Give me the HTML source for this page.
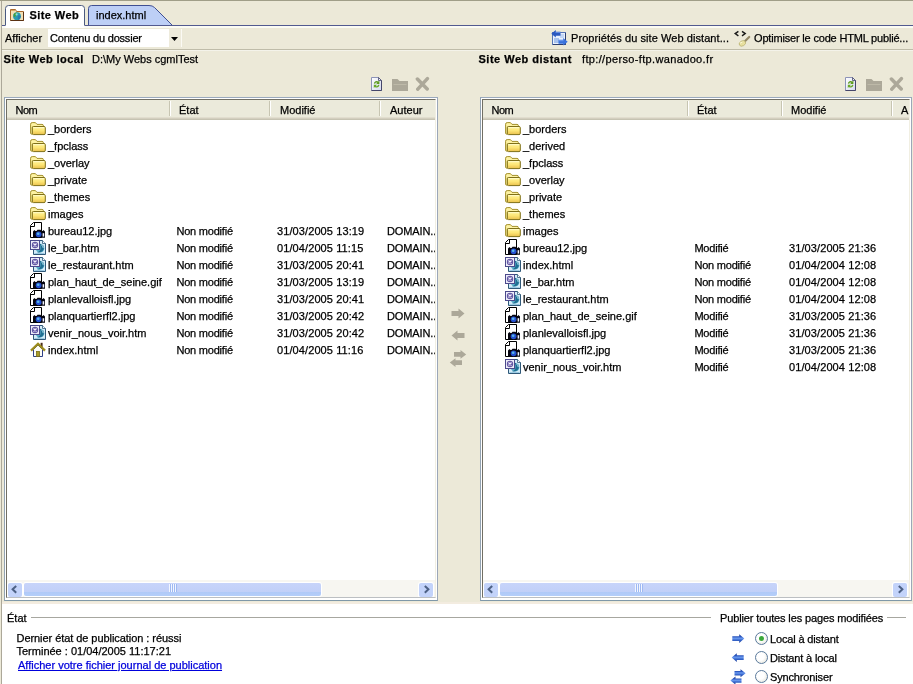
<!DOCTYPE html>
<html lang="fr"><head><meta charset="utf-8"><title>Site Web</title>
<style>
html,body{margin:0;padding:0}
body{will-change:transform;width:913px;height:684px;overflow:hidden;background:#ece9d8;position:relative;font-family:"Liberation Sans",sans-serif;font-size:11px;color:#000;line-height:13px;-webkit-text-stroke-width:.25px}
.a{position:absolute;white-space:pre}
b{letter-spacing:.42px}
.panel{position:absolute;top:97px;height:502px;border:1px solid #93a0b2;border-color:#9aa9bd #9ba7b8 #7f98a8 #93a3b2;background:#fff}
.pin{position:absolute;left:0;top:0;right:0;bottom:0;border:1px solid #fff}
.pin2{position:absolute;left:0;top:0;height:497px;border-top:1px solid #716f64;border-left:1px solid #716f64;border-right:1px solid #f1efe2;border-bottom:1px solid #bcbfc2;background:#fff;overflow:hidden}
.hdr{position:absolute;left:0;top:0;right:0;height:17px;background:#ebeadb;border-bottom:3px solid #d3cfbf}
.hdr:after{content:"";position:absolute;left:0;right:0;bottom:-3px;height:1px;background:#c6c3b2}
.hdr:before{content:"";position:absolute;left:0;right:0;bottom:-1px;height:1px;background:#e1ddce}
.ht{position:absolute;top:4px;line-height:13px;white-space:pre}
.sep{position:absolute;top:1px;width:1px;height:15px;background:#c7c5b2;border-right:1px solid #fff}
.row{position:absolute;left:0;right:0;height:17px}
.c{position:absolute;top:1px;line-height:17px;white-space:pre}
.ic{position:absolute}
.sb{position:absolute;left:0;right:0;bottom:0;height:17px;background:#f7f6f1}
.sbtn{position:absolute;top:3px;width:14px;height:14px;background:#c3d3fa;border-radius:2px;box-shadow:0 0 0 1px #fff}
.thumb{position:absolute;top:3px;height:13px;border-radius:2px;box-shadow:0 0 0 1px #fff;background:linear-gradient(#c7d4fa 0%,#c2d0f8 66%,#b0caf8 72%,#b5cef9 100%)}
.grip{position:absolute;left:50%;top:1px;width:8px;height:8px;margin-left:-4px;background:repeating-linear-gradient(90deg,#f2f6ff 0 1px,#9fb9f2 1px 2px)}
.ln{position:absolute;height:1px}
.radio{position:absolute;width:11px;height:11px;border:1px solid #5b7a9c;border-radius:50%;background:radial-gradient(circle at 40% 40%,#fff 40%,#dcdcd0)}
</style></head>
<body>
<svg width="0" height="0" style="position:absolute"><defs><linearGradient id="gf" x1="0" y1="0" x2="0" y2="1"><stop offset="0" stop-color="#fff59a"/><stop offset=".5" stop-color="#fde676"/><stop offset="1" stop-color="#eac04c"/></linearGradient><linearGradient id="gp" x1="0" y1="0" x2="1" y2="1"><stop offset="0" stop-color="#ffffff"/><stop offset="1" stop-color="#d4d9ee"/></linearGradient><linearGradient id="gb" x1="0" y1="0" x2="0" y2="1"><stop offset="0" stop-color="#16368c"/><stop offset=".28" stop-color="#2a56c0"/><stop offset=".46" stop-color="#6c9cf0"/><stop offset=".68" stop-color="#3565cc"/><stop offset="1" stop-color="#1c3c94"/></linearGradient></defs></svg><div class="ln" style="left:0;top:0;width:913px;background:#a09e88"></div><div class="a" style="left:1px;top:1px;width:1px;height:683px;background:#aca899"></div><div class="a" style="left:2px;top:26px;width:911px;height:2px;background:#fbfbf3"></div><svg class="a" style="left:0;top:0" width="913" height="28" viewBox="0 0 913 28">
<path d="M88.5 25.5V8.5Q88.5 5.5 91.5 5.5H149Q152.5 5.5 154.5 7.5L172.5 25.5Z" fill="#bdcff6" stroke="#3f4f92"/>
<path d="M2 25.5H5.5M84.5 25.5H913" stroke="#525a90" fill="none"/>
<path d="M5.5 28V8.5Q5.5 5.5 8.5 5.5H81.5Q84.5 5.5 84.5 8.5V28Z" fill="#fff" stroke="none"/>
<path d="M5.5 25.5V8.5Q5.5 5.5 8.5 5.5H81.5Q84.5 5.5 84.5 8.5V25.5" fill="none" stroke="#4a5a80"/>
</svg><svg class="a" style="left:9px;top:8px" width="16" height="14" viewBox="0 0 16 14"><path d="M1.5 12.5V1.5H6.5L7.5 3.5H14.5V12.5Z" fill="#f2dfb4" stroke="#a8682c"/><path d="M2 2.5H6" stroke="#d8a868" stroke-width="1"/><path d="M14.5 4V12.5H1.5" fill="none" stroke="#5a3214" stroke-width="1"/><circle cx="8" cy="8.2" r="3.9" fill="#2a9cae"/><path d="M4.6 6.6Q6 4.4 8.2 4.6Q8 7 5.4 9.2Q4.4 8 4.6 6.6Z" fill="#4a9c34"/><path d="M9 7.5Q11 6.5 11.8 8.5Q11 11.5 9 11.8Q8.5 9.5 9 7.5Z" fill="#2a78b0"/><circle cx="7.6" cy="6.4" r="1.1" fill="#8fe0e0"/></svg><b class="a" style="left:29.5px;top:9px">Site Web</b><span class="a" style="left:96px;top:9px">index.html</span><span class="a" style="left:5px;top:32px">Afficher</span><div class="a" style="left:48px;top:29px;width:121px;height:18px;background:#fff"></div><span class="a" style="left:50px;top:32px;letter-spacing:-.2px">Contenu du dossier</span><div class="a" style="left:169px;top:29px;width:12px;height:18px;background:#eeebdc;border-right:1px solid #fbfaf4"></div><svg class="a" style="left:171px;top:37px" width="7" height="4" viewBox="0 0 7 4"><path d="M0 0H7L3.5 4Z" fill="#000"/></svg><svg class="a" style="left:551px;top:30px" width="17" height="16" viewBox="0 0 17 16"><rect x="1.5" y="2.5" width="13" height="12" fill="#e9f1fd" stroke="#5575b5"/><path d="M14.5 3V14.5H2" fill="none" stroke="#2c3e70"/><rect x="3" y="8" width="5" height="5" fill="#a9c3ee"/><rect x="9" y="4" width="4" height="4" fill="#c3d6f5"/><path d="M9.5 1.8H4.8V0L0.3 3.8L4.8 7.6V5.8H9.5Z" fill="#2b59c0"/><path d="M7.5 9.8H12.2V8L16.7 11.8L12.2 15.6V13.8H7.5Z" fill="#3a72dc"/><path d="M7.5 10.7H12.5" stroke="#7fa8f0" stroke-width=".8"/><path d="M4.5 2.5H9.5" stroke="#6f97e8" stroke-width=".8"/></svg><span class="a" style="left:571px;top:32px;letter-spacing:.07px">Propriétés du site Web distant...</span><svg class="a" style="left:733px;top:29px" width="18" height="18" viewBox="0 0 18 18"><path d="M5.4 2.4L2.2 4.6L5.4 6.8M9 2.4L12.2 4.6L9 6.8" fill="none" stroke="#1a1a1a" stroke-width="1.4"/><path d="M16.2 8L11.4 12.8" stroke="#948868" stroke-width="2.2" stroke-linecap="round"/><ellipse cx="9.4" cy="14.4" rx="3.4" ry="2.5" fill="#e8e0a0" stroke="#b8b070" stroke-width=".7" transform="rotate(-30 9.4 14.4)"/><path d="M7 14.2L9.4 13" stroke="#fffde0" stroke-width=".9"/></svg><span class="a" style="left:754px;top:32px;letter-spacing:-.18px">Optimiser le code HTML publié...</span><div class="ln" style="left:2px;top:49px;width:911px;background:#bfbca9"></div><div class="ln" style="left:2px;top:50px;width:911px;background:#f4f3ea"></div><b class="a" style="left:3.5px;top:53px">Site Web local</b><span class="a" style="left:92px;top:53px">D:\My Webs cgmlTest</span><b class="a" style="left:478.5px;top:53px;letter-spacing:.5px">Site Web distant</b><span class="a" style="left:582px;top:53px;letter-spacing:.35px">ftp://perso-ftp.wanadoo.fr</span><svg class="a" style="left:371px;top:77px" width="12" height="14" viewBox="0 0 12 14"><path d="M0.5 0.5H7.5L10.5 3.5V13.5H0.5Z" fill="url(#gp)" stroke="#8d93b8"/><path d="M10.5 3.5V13.5H0.5" fill="none" stroke="#45466a"/><path d="M7.5 0.5V3.5H10.5Z" fill="#e8ecf8" stroke="#45466a" stroke-width=".8"/><path d="M2.8 6.6A2.9 2.9 0 0 1 7.4 4.6L8.4 3.6V6.9H5.2L6.3 5.7A1.5 1.5 0 0 0 4.2 6.8Z" fill="#5e9c1e"/><path d="M8.4 8A2.9 2.9 0 0 1 3.8 10L2.8 11V7.7H6L4.9 8.9A1.5 1.5 0 0 0 7 7.8Z" fill="#6aa828"/></svg><svg class="a" style="left:392px;top:78px" width="16" height="13" viewBox="0 0 16 13"><path d="M0 13V1H5.5L7.5 3H16V13Z" fill="#aca899"/><path d="M1.5 6.5H14.5" stroke="#bdb9a8" stroke-width="1"/></svg><svg class="a" style="left:415px;top:76px" width="15" height="15" viewBox="0 0 15 15"><path d="M2.4 3L12.2 13M12.4 2.6L2.8 13.2" stroke="#aca899" stroke-width="3.5" stroke-linecap="round"/></svg><svg class="a" style="left:845px;top:77px" width="12" height="14" viewBox="0 0 12 14"><path d="M0.5 0.5H7.5L10.5 3.5V13.5H0.5Z" fill="url(#gp)" stroke="#8d93b8"/><path d="M10.5 3.5V13.5H0.5" fill="none" stroke="#45466a"/><path d="M7.5 0.5V3.5H10.5Z" fill="#e8ecf8" stroke="#45466a" stroke-width=".8"/><path d="M2.8 6.6A2.9 2.9 0 0 1 7.4 4.6L8.4 3.6V6.9H5.2L6.3 5.7A1.5 1.5 0 0 0 4.2 6.8Z" fill="#5e9c1e"/><path d="M8.4 8A2.9 2.9 0 0 1 3.8 10L2.8 11V7.7H6L4.9 8.9A1.5 1.5 0 0 0 7 7.8Z" fill="#6aa828"/></svg><svg class="a" style="left:866px;top:78px" width="16" height="13" viewBox="0 0 16 13"><path d="M0 13V1H5.5L7.5 3H16V13Z" fill="#aca899"/><path d="M1.5 6.5H14.5" stroke="#bdb9a8" stroke-width="1"/></svg><svg class="a" style="left:889px;top:76px" width="15" height="15" viewBox="0 0 15 15"><path d="M2.4 3L12.2 13M12.4 2.6L2.8 13.2" stroke="#aca899" stroke-width="3.5" stroke-linecap="round"/></svg><div class="panel" style="left:4px;width:432px"><div class="pin"><div class="pin2" style="width:428px"><div class="hdr"><span class="ht" style="left:8.5px;letter-spacing:-.5px">Nom</span><span class="ht" style="left:172.0px">État</span><i class="sep" style="left:162px"></i><span class="ht" style="left:273.0px">Modifié</span><i class="sep" style="left:262px"></i><span class="ht" style="left:383.0px">Auteur</span><i class="sep" style="left:372px"></i></div><div class="row" style="top:20px"><svg class="ic"  width="16" height="14" viewBox="0 0 16 14" style="left:23px;top:2px"><path d="M0.6 11V2.2Q0.6 0.6 2.2 0.6H5.4L7 2.4H12Q13.4 2.4 13.4 3.7V5H2.4V12.2H1.8Q0.6 12.2 0.6 11Z" fill="#fdf2a2" stroke="#a4902c"/><path d="M2.3 5.7Q2.3 4.5 3.5 4.5H14Q15.3 4.5 15.3 5.7V11.3Q15.3 12.6 14 12.6H3.5Q2.3 12.6 2.3 11.3Z" fill="url(#gf)" stroke="#7f7018"/><path d="M3.4 5.7H14.2" stroke="#fffacc" stroke-width="1"/></svg><span class="c" style="left:41px">_borders</span></div><div class="row" style="top:37px"><svg class="ic"  width="16" height="14" viewBox="0 0 16 14" style="left:23px;top:2px"><path d="M0.6 11V2.2Q0.6 0.6 2.2 0.6H5.4L7 2.4H12Q13.4 2.4 13.4 3.7V5H2.4V12.2H1.8Q0.6 12.2 0.6 11Z" fill="#fdf2a2" stroke="#a4902c"/><path d="M2.3 5.7Q2.3 4.5 3.5 4.5H14Q15.3 4.5 15.3 5.7V11.3Q15.3 12.6 14 12.6H3.5Q2.3 12.6 2.3 11.3Z" fill="url(#gf)" stroke="#7f7018"/><path d="M3.4 5.7H14.2" stroke="#fffacc" stroke-width="1"/></svg><span class="c" style="left:41px">_fpclass</span></div><div class="row" style="top:54px"><svg class="ic"  width="16" height="14" viewBox="0 0 16 14" style="left:23px;top:2px"><path d="M0.6 11V2.2Q0.6 0.6 2.2 0.6H5.4L7 2.4H12Q13.4 2.4 13.4 3.7V5H2.4V12.2H1.8Q0.6 12.2 0.6 11Z" fill="#fdf2a2" stroke="#a4902c"/><path d="M2.3 5.7Q2.3 4.5 3.5 4.5H14Q15.3 4.5 15.3 5.7V11.3Q15.3 12.6 14 12.6H3.5Q2.3 12.6 2.3 11.3Z" fill="url(#gf)" stroke="#7f7018"/><path d="M3.4 5.7H14.2" stroke="#fffacc" stroke-width="1"/></svg><span class="c" style="left:41px">_overlay</span></div><div class="row" style="top:71px"><svg class="ic"  width="16" height="14" viewBox="0 0 16 14" style="left:23px;top:2px"><path d="M0.6 11V2.2Q0.6 0.6 2.2 0.6H5.4L7 2.4H12Q13.4 2.4 13.4 3.7V5H2.4V12.2H1.8Q0.6 12.2 0.6 11Z" fill="#fdf2a2" stroke="#a4902c"/><path d="M2.3 5.7Q2.3 4.5 3.5 4.5H14Q15.3 4.5 15.3 5.7V11.3Q15.3 12.6 14 12.6H3.5Q2.3 12.6 2.3 11.3Z" fill="url(#gf)" stroke="#7f7018"/><path d="M3.4 5.7H14.2" stroke="#fffacc" stroke-width="1"/></svg><span class="c" style="left:41px">_private</span></div><div class="row" style="top:88px"><svg class="ic"  width="16" height="14" viewBox="0 0 16 14" style="left:23px;top:2px"><path d="M0.6 11V2.2Q0.6 0.6 2.2 0.6H5.4L7 2.4H12Q13.4 2.4 13.4 3.7V5H2.4V12.2H1.8Q0.6 12.2 0.6 11Z" fill="#fdf2a2" stroke="#a4902c"/><path d="M2.3 5.7Q2.3 4.5 3.5 4.5H14Q15.3 4.5 15.3 5.7V11.3Q15.3 12.6 14 12.6H3.5Q2.3 12.6 2.3 11.3Z" fill="url(#gf)" stroke="#7f7018"/><path d="M3.4 5.7H14.2" stroke="#fffacc" stroke-width="1"/></svg><span class="c" style="left:41px">_themes</span></div><div class="row" style="top:105px"><svg class="ic"  width="16" height="14" viewBox="0 0 16 14" style="left:23px;top:2px"><path d="M0.6 11V2.2Q0.6 0.6 2.2 0.6H5.4L7 2.4H12Q13.4 2.4 13.4 3.7V5H2.4V12.2H1.8Q0.6 12.2 0.6 11Z" fill="#fdf2a2" stroke="#a4902c"/><path d="M2.3 5.7Q2.3 4.5 3.5 4.5H14Q15.3 4.5 15.3 5.7V11.3Q15.3 12.6 14 12.6H3.5Q2.3 12.6 2.3 11.3Z" fill="url(#gf)" stroke="#7f7018"/><path d="M3.4 5.7H14.2" stroke="#fffacc" stroke-width="1"/></svg><span class="c" style="left:41px">images</span></div><div class="row" style="top:122px"><svg class="ic"  width="16" height="16" viewBox="0 0 16 16" style="left:23px;top:0px"><path d="M3.5 0.5H11.5V15.5H0.5V3.5Z" fill="#fff" stroke="#000"/><path d="M0.5 4.5H4.5V0.5" fill="none" stroke="#000"/><path d="M3 9.5L4.5 8L5.5 9H6.5L7.5 7.8H10.5L11.5 9H12.5L13.5 8L15 9.5V15.8H3Z" fill="#05050f"/><circle cx="8.6" cy="12.3" r="2.9" fill="#2450d0"/><circle cx="8.2" cy="11.8" r="1.3" fill="#58b8e8"/><rect x="12.6" y="11.2" width="1.6" height="3.4" fill="#eef2ff"/></svg><span class="c" style="left:41px">bureau12.jpg</span><span class="c" style="left:169.4px;letter-spacing:-.2px">Non modifié</span><span class="c" style="left:270px;letter-spacing:.1px">31/03/2005 13:19</span><span class="c" style="left:380px;letter-spacing:-.12px">DOMAIN..</span></div><div class="row" style="top:139px"><svg class="ic"  width="16" height="16" viewBox="0 0 16 16" style="left:23px;top:1px"><path d="M3.5 0.5H12.5L15.5 3.5V14.5H3.5Z" fill="#d4ecf8" stroke="#2f5878"/><path d="M12.5 0.5V3.5H15.5" fill="#f4fbff" stroke="#2f5878" stroke-width=".8"/><circle cx="10" cy="8.2" r="4.3" fill="#58acc8"/><path d="M9.6 3.6Q14.8 5 13.6 9.6Q12 13 7 12.4Q10.6 11.2 10.6 8Q10.6 5.4 9.6 3.6Z" fill="#1f6f92"/><path d="M11 4.6Q13.4 5.6 13.2 8" stroke="#b8e4f0" stroke-width=".9" fill="none"/><path d="M4.5 13.5H14.5" stroke="#9ccbe4" stroke-width="1"/><rect x="0.5" y="0.5" width="9" height="9" fill="#eeeefa" stroke="#4c4a8c"/><circle cx="5" cy="5" r="3.2" fill="#6458a4"/><path d="M3.5 3.5L6.5 6.5M6.5 3.5L3.5 6.5" stroke="#f4f0ff" stroke-width="1.2"/></svg><span class="c" style="left:41px">le_bar.htm</span><span class="c" style="left:169.4px;letter-spacing:-.2px">Non modifié</span><span class="c" style="left:270px;letter-spacing:.1px">01/04/2005 11:15</span><span class="c" style="left:380px;letter-spacing:-.12px">DOMAIN..</span></div><div class="row" style="top:156px"><svg class="ic"  width="16" height="16" viewBox="0 0 16 16" style="left:23px;top:1px"><path d="M3.5 0.5H12.5L15.5 3.5V14.5H3.5Z" fill="#d4ecf8" stroke="#2f5878"/><path d="M12.5 0.5V3.5H15.5" fill="#f4fbff" stroke="#2f5878" stroke-width=".8"/><circle cx="10" cy="8.2" r="4.3" fill="#58acc8"/><path d="M9.6 3.6Q14.8 5 13.6 9.6Q12 13 7 12.4Q10.6 11.2 10.6 8Q10.6 5.4 9.6 3.6Z" fill="#1f6f92"/><path d="M11 4.6Q13.4 5.6 13.2 8" stroke="#b8e4f0" stroke-width=".9" fill="none"/><path d="M4.5 13.5H14.5" stroke="#9ccbe4" stroke-width="1"/><rect x="0.5" y="0.5" width="9" height="9" fill="#eeeefa" stroke="#4c4a8c"/><circle cx="5" cy="5" r="3.2" fill="#6458a4"/><path d="M3.5 3.5L6.5 6.5M6.5 3.5L3.5 6.5" stroke="#f4f0ff" stroke-width="1.2"/></svg><span class="c" style="left:41px">le_restaurant.htm</span><span class="c" style="left:169.4px;letter-spacing:-.2px">Non modifié</span><span class="c" style="left:270px;letter-spacing:.1px">31/03/2005 20:41</span><span class="c" style="left:380px;letter-spacing:-.12px">DOMAIN..</span></div><div class="row" style="top:173px"><svg class="ic"  width="16" height="16" viewBox="0 0 16 16" style="left:23px;top:0px"><path d="M3.5 0.5H11.5V15.5H0.5V3.5Z" fill="#fff" stroke="#000"/><path d="M0.5 4.5H4.5V0.5" fill="none" stroke="#000"/><path d="M3 9.5L4.5 8L5.5 9H6.5L7.5 7.8H10.5L11.5 9H12.5L13.5 8L15 9.5V15.8H3Z" fill="#05050f"/><circle cx="8.6" cy="12.3" r="2.9" fill="#2450d0"/><circle cx="8.2" cy="11.8" r="1.3" fill="#58b8e8"/><rect x="12.6" y="11.2" width="1.6" height="3.4" fill="#eef2ff"/></svg><span class="c" style="left:41px">plan_haut_de_seine.gif</span><span class="c" style="left:169.4px;letter-spacing:-.2px">Non modifié</span><span class="c" style="left:270px;letter-spacing:.1px">31/03/2005 13:19</span><span class="c" style="left:380px;letter-spacing:-.12px">DOMAIN..</span></div><div class="row" style="top:190px"><svg class="ic"  width="16" height="16" viewBox="0 0 16 16" style="left:23px;top:0px"><path d="M3.5 0.5H11.5V15.5H0.5V3.5Z" fill="#fff" stroke="#000"/><path d="M0.5 4.5H4.5V0.5" fill="none" stroke="#000"/><path d="M3 9.5L4.5 8L5.5 9H6.5L7.5 7.8H10.5L11.5 9H12.5L13.5 8L15 9.5V15.8H3Z" fill="#05050f"/><circle cx="8.6" cy="12.3" r="2.9" fill="#2450d0"/><circle cx="8.2" cy="11.8" r="1.3" fill="#58b8e8"/><rect x="12.6" y="11.2" width="1.6" height="3.4" fill="#eef2ff"/></svg><span class="c" style="left:41px">planlevalloisfl.jpg</span><span class="c" style="left:169.4px;letter-spacing:-.2px">Non modifié</span><span class="c" style="left:270px;letter-spacing:.1px">31/03/2005 20:41</span><span class="c" style="left:380px;letter-spacing:-.12px">DOMAIN..</span></div><div class="row" style="top:207px"><svg class="ic"  width="16" height="16" viewBox="0 0 16 16" style="left:23px;top:0px"><path d="M3.5 0.5H11.5V15.5H0.5V3.5Z" fill="#fff" stroke="#000"/><path d="M0.5 4.5H4.5V0.5" fill="none" stroke="#000"/><path d="M3 9.5L4.5 8L5.5 9H6.5L7.5 7.8H10.5L11.5 9H12.5L13.5 8L15 9.5V15.8H3Z" fill="#05050f"/><circle cx="8.6" cy="12.3" r="2.9" fill="#2450d0"/><circle cx="8.2" cy="11.8" r="1.3" fill="#58b8e8"/><rect x="12.6" y="11.2" width="1.6" height="3.4" fill="#eef2ff"/></svg><span class="c" style="left:41px">planquartierfl2.jpg</span><span class="c" style="left:169.4px;letter-spacing:-.2px">Non modifié</span><span class="c" style="left:270px;letter-spacing:.1px">31/03/2005 20:42</span><span class="c" style="left:380px;letter-spacing:-.12px">DOMAIN..</span></div><div class="row" style="top:224px"><svg class="ic"  width="16" height="16" viewBox="0 0 16 16" style="left:23px;top:1px"><path d="M3.5 0.5H12.5L15.5 3.5V14.5H3.5Z" fill="#d4ecf8" stroke="#2f5878"/><path d="M12.5 0.5V3.5H15.5" fill="#f4fbff" stroke="#2f5878" stroke-width=".8"/><circle cx="10" cy="8.2" r="4.3" fill="#58acc8"/><path d="M9.6 3.6Q14.8 5 13.6 9.6Q12 13 7 12.4Q10.6 11.2 10.6 8Q10.6 5.4 9.6 3.6Z" fill="#1f6f92"/><path d="M11 4.6Q13.4 5.6 13.2 8" stroke="#b8e4f0" stroke-width=".9" fill="none"/><path d="M4.5 13.5H14.5" stroke="#9ccbe4" stroke-width="1"/><rect x="0.5" y="0.5" width="9" height="9" fill="#eeeefa" stroke="#4c4a8c"/><circle cx="5" cy="5" r="3.2" fill="#6458a4"/><path d="M3.5 3.5L6.5 6.5M6.5 3.5L3.5 6.5" stroke="#f4f0ff" stroke-width="1.2"/></svg><span class="c" style="left:41px">venir_nous_voir.htm</span><span class="c" style="left:169.4px;letter-spacing:-.2px">Non modifié</span><span class="c" style="left:270px;letter-spacing:.1px">31/03/2005 20:42</span><span class="c" style="left:380px;letter-spacing:-.12px">DOMAIN..</span></div><div class="row" style="top:241px"><svg class="ic"  width="16" height="16" viewBox="0 0 16 16" style="left:23px;top:1px"><path d="M3.5 7.5V14.5H12.5V7.5L8 3Z" fill="#fcfcf6" stroke="#2f3f86"/><rect x="6.5" y="9.5" width="3" height="5" fill="#a89c28" stroke="#7a6e14" stroke-width=".8"/><rect x="10.6" y="0.8" width="2" height="5" fill="#4a2c18"/><path d="M1 8.6L8 1.8L15 8.6" fill="none" stroke="#9c8c1c" stroke-width="2.3"/></svg><span class="c" style="left:41px">index.html</span><span class="c" style="left:169.4px;letter-spacing:-.2px">Non modifié</span><span class="c" style="left:270px;letter-spacing:.1px">01/04/2005 11:16</span><span class="c" style="left:380px;letter-spacing:-.12px">DOMAIN..</span></div><div class="sb"><div class="sbtn" style="left:1px"><svg width="14" height="14" viewBox="0 0 14 14"><path d="M8.2 2.9L4.6 6.3L8.2 9.7" fill="none" stroke="#4d6185" stroke-width="2"/></svg></div><div class="thumb" style="left:17px;width:297px"><i class="grip"></i></div><div class="sbtn" style="right:2px"><svg width="14" height="14" viewBox="0 0 14 14"><path d="M5.8 2.9L9.4 6.3L5.8 9.7" fill="none" stroke="#4d6185" stroke-width="2"/></svg></div></div></div></div></div><div class="panel" style="left:480px;width:430px"><div class="pin"><div class="pin2" style="width:426px"><div class="hdr"><span class="ht" style="left:8.5px;letter-spacing:-.5px">Nom</span><span class="ht" style="left:214.0px">État</span><i class="sep" style="left:204px"></i><span class="ht" style="left:308.0px">Modifié</span><i class="sep" style="left:298px"></i><span class="ht" style="left:418.0px">A</span><i class="sep" style="left:408px"></i></div><div class="row" style="top:20px"><svg class="ic"  width="16" height="14" viewBox="0 0 16 14" style="left:22px;top:2px"><path d="M0.6 11V2.2Q0.6 0.6 2.2 0.6H5.4L7 2.4H12Q13.4 2.4 13.4 3.7V5H2.4V12.2H1.8Q0.6 12.2 0.6 11Z" fill="#fdf2a2" stroke="#a4902c"/><path d="M2.3 5.7Q2.3 4.5 3.5 4.5H14Q15.3 4.5 15.3 5.7V11.3Q15.3 12.6 14 12.6H3.5Q2.3 12.6 2.3 11.3Z" fill="url(#gf)" stroke="#7f7018"/><path d="M3.4 5.7H14.2" stroke="#fffacc" stroke-width="1"/></svg><span class="c" style="left:40px">_borders</span></div><div class="row" style="top:37px"><svg class="ic"  width="16" height="14" viewBox="0 0 16 14" style="left:22px;top:2px"><path d="M0.6 11V2.2Q0.6 0.6 2.2 0.6H5.4L7 2.4H12Q13.4 2.4 13.4 3.7V5H2.4V12.2H1.8Q0.6 12.2 0.6 11Z" fill="#fdf2a2" stroke="#a4902c"/><path d="M2.3 5.7Q2.3 4.5 3.5 4.5H14Q15.3 4.5 15.3 5.7V11.3Q15.3 12.6 14 12.6H3.5Q2.3 12.6 2.3 11.3Z" fill="url(#gf)" stroke="#7f7018"/><path d="M3.4 5.7H14.2" stroke="#fffacc" stroke-width="1"/></svg><span class="c" style="left:40px">_derived</span></div><div class="row" style="top:54px"><svg class="ic"  width="16" height="14" viewBox="0 0 16 14" style="left:22px;top:2px"><path d="M0.6 11V2.2Q0.6 0.6 2.2 0.6H5.4L7 2.4H12Q13.4 2.4 13.4 3.7V5H2.4V12.2H1.8Q0.6 12.2 0.6 11Z" fill="#fdf2a2" stroke="#a4902c"/><path d="M2.3 5.7Q2.3 4.5 3.5 4.5H14Q15.3 4.5 15.3 5.7V11.3Q15.3 12.6 14 12.6H3.5Q2.3 12.6 2.3 11.3Z" fill="url(#gf)" stroke="#7f7018"/><path d="M3.4 5.7H14.2" stroke="#fffacc" stroke-width="1"/></svg><span class="c" style="left:40px">_fpclass</span></div><div class="row" style="top:71px"><svg class="ic"  width="16" height="14" viewBox="0 0 16 14" style="left:22px;top:2px"><path d="M0.6 11V2.2Q0.6 0.6 2.2 0.6H5.4L7 2.4H12Q13.4 2.4 13.4 3.7V5H2.4V12.2H1.8Q0.6 12.2 0.6 11Z" fill="#fdf2a2" stroke="#a4902c"/><path d="M2.3 5.7Q2.3 4.5 3.5 4.5H14Q15.3 4.5 15.3 5.7V11.3Q15.3 12.6 14 12.6H3.5Q2.3 12.6 2.3 11.3Z" fill="url(#gf)" stroke="#7f7018"/><path d="M3.4 5.7H14.2" stroke="#fffacc" stroke-width="1"/></svg><span class="c" style="left:40px">_overlay</span></div><div class="row" style="top:88px"><svg class="ic"  width="16" height="14" viewBox="0 0 16 14" style="left:22px;top:2px"><path d="M0.6 11V2.2Q0.6 0.6 2.2 0.6H5.4L7 2.4H12Q13.4 2.4 13.4 3.7V5H2.4V12.2H1.8Q0.6 12.2 0.6 11Z" fill="#fdf2a2" stroke="#a4902c"/><path d="M2.3 5.7Q2.3 4.5 3.5 4.5H14Q15.3 4.5 15.3 5.7V11.3Q15.3 12.6 14 12.6H3.5Q2.3 12.6 2.3 11.3Z" fill="url(#gf)" stroke="#7f7018"/><path d="M3.4 5.7H14.2" stroke="#fffacc" stroke-width="1"/></svg><span class="c" style="left:40px">_private</span></div><div class="row" style="top:105px"><svg class="ic"  width="16" height="14" viewBox="0 0 16 14" style="left:22px;top:2px"><path d="M0.6 11V2.2Q0.6 0.6 2.2 0.6H5.4L7 2.4H12Q13.4 2.4 13.4 3.7V5H2.4V12.2H1.8Q0.6 12.2 0.6 11Z" fill="#fdf2a2" stroke="#a4902c"/><path d="M2.3 5.7Q2.3 4.5 3.5 4.5H14Q15.3 4.5 15.3 5.7V11.3Q15.3 12.6 14 12.6H3.5Q2.3 12.6 2.3 11.3Z" fill="url(#gf)" stroke="#7f7018"/><path d="M3.4 5.7H14.2" stroke="#fffacc" stroke-width="1"/></svg><span class="c" style="left:40px">_themes</span></div><div class="row" style="top:122px"><svg class="ic"  width="16" height="14" viewBox="0 0 16 14" style="left:22px;top:2px"><path d="M0.6 11V2.2Q0.6 0.6 2.2 0.6H5.4L7 2.4H12Q13.4 2.4 13.4 3.7V5H2.4V12.2H1.8Q0.6 12.2 0.6 11Z" fill="#fdf2a2" stroke="#a4902c"/><path d="M2.3 5.7Q2.3 4.5 3.5 4.5H14Q15.3 4.5 15.3 5.7V11.3Q15.3 12.6 14 12.6H3.5Q2.3 12.6 2.3 11.3Z" fill="url(#gf)" stroke="#7f7018"/><path d="M3.4 5.7H14.2" stroke="#fffacc" stroke-width="1"/></svg><span class="c" style="left:40px">images</span></div><div class="row" style="top:139px"><svg class="ic"  width="16" height="16" viewBox="0 0 16 16" style="left:22px;top:0px"><path d="M3.5 0.5H11.5V15.5H0.5V3.5Z" fill="#fff" stroke="#000"/><path d="M0.5 4.5H4.5V0.5" fill="none" stroke="#000"/><path d="M3 9.5L4.5 8L5.5 9H6.5L7.5 7.8H10.5L11.5 9H12.5L13.5 8L15 9.5V15.8H3Z" fill="#05050f"/><circle cx="8.6" cy="12.3" r="2.9" fill="#2450d0"/><circle cx="8.2" cy="11.8" r="1.3" fill="#58b8e8"/><rect x="12.6" y="11.2" width="1.6" height="3.4" fill="#eef2ff"/></svg><span class="c" style="left:40px">bureau12.jpg</span><span class="c" style="left:211.4px;letter-spacing:-.2px">Modifié</span><span class="c" style="left:306px;letter-spacing:.1px">31/03/2005 21:36</span></div><div class="row" style="top:156px"><svg class="ic"  width="16" height="16" viewBox="0 0 16 16" style="left:22px;top:1px"><path d="M3.5 0.5H12.5L15.5 3.5V14.5H3.5Z" fill="#d4ecf8" stroke="#2f5878"/><path d="M12.5 0.5V3.5H15.5" fill="#f4fbff" stroke="#2f5878" stroke-width=".8"/><circle cx="10" cy="8.2" r="4.3" fill="#58acc8"/><path d="M9.6 3.6Q14.8 5 13.6 9.6Q12 13 7 12.4Q10.6 11.2 10.6 8Q10.6 5.4 9.6 3.6Z" fill="#1f6f92"/><path d="M11 4.6Q13.4 5.6 13.2 8" stroke="#b8e4f0" stroke-width=".9" fill="none"/><path d="M4.5 13.5H14.5" stroke="#9ccbe4" stroke-width="1"/><rect x="0.5" y="0.5" width="9" height="9" fill="#eeeefa" stroke="#4c4a8c"/><circle cx="5" cy="5" r="3.2" fill="#6458a4"/><path d="M3.5 3.5L6.5 6.5M6.5 3.5L3.5 6.5" stroke="#f4f0ff" stroke-width="1.2"/></svg><span class="c" style="left:40px">index.html</span><span class="c" style="left:211.4px;letter-spacing:-.2px">Non modifié</span><span class="c" style="left:306px;letter-spacing:.1px">01/04/2004 12:08</span></div><div class="row" style="top:173px"><svg class="ic"  width="16" height="16" viewBox="0 0 16 16" style="left:22px;top:1px"><path d="M3.5 0.5H12.5L15.5 3.5V14.5H3.5Z" fill="#d4ecf8" stroke="#2f5878"/><path d="M12.5 0.5V3.5H15.5" fill="#f4fbff" stroke="#2f5878" stroke-width=".8"/><circle cx="10" cy="8.2" r="4.3" fill="#58acc8"/><path d="M9.6 3.6Q14.8 5 13.6 9.6Q12 13 7 12.4Q10.6 11.2 10.6 8Q10.6 5.4 9.6 3.6Z" fill="#1f6f92"/><path d="M11 4.6Q13.4 5.6 13.2 8" stroke="#b8e4f0" stroke-width=".9" fill="none"/><path d="M4.5 13.5H14.5" stroke="#9ccbe4" stroke-width="1"/><rect x="0.5" y="0.5" width="9" height="9" fill="#eeeefa" stroke="#4c4a8c"/><circle cx="5" cy="5" r="3.2" fill="#6458a4"/><path d="M3.5 3.5L6.5 6.5M6.5 3.5L3.5 6.5" stroke="#f4f0ff" stroke-width="1.2"/></svg><span class="c" style="left:40px">le_bar.htm</span><span class="c" style="left:211.4px;letter-spacing:-.2px">Non modifié</span><span class="c" style="left:306px;letter-spacing:.1px">01/04/2004 12:08</span></div><div class="row" style="top:190px"><svg class="ic"  width="16" height="16" viewBox="0 0 16 16" style="left:22px;top:1px"><path d="M3.5 0.5H12.5L15.5 3.5V14.5H3.5Z" fill="#d4ecf8" stroke="#2f5878"/><path d="M12.5 0.5V3.5H15.5" fill="#f4fbff" stroke="#2f5878" stroke-width=".8"/><circle cx="10" cy="8.2" r="4.3" fill="#58acc8"/><path d="M9.6 3.6Q14.8 5 13.6 9.6Q12 13 7 12.4Q10.6 11.2 10.6 8Q10.6 5.4 9.6 3.6Z" fill="#1f6f92"/><path d="M11 4.6Q13.4 5.6 13.2 8" stroke="#b8e4f0" stroke-width=".9" fill="none"/><path d="M4.5 13.5H14.5" stroke="#9ccbe4" stroke-width="1"/><rect x="0.5" y="0.5" width="9" height="9" fill="#eeeefa" stroke="#4c4a8c"/><circle cx="5" cy="5" r="3.2" fill="#6458a4"/><path d="M3.5 3.5L6.5 6.5M6.5 3.5L3.5 6.5" stroke="#f4f0ff" stroke-width="1.2"/></svg><span class="c" style="left:40px">le_restaurant.htm</span><span class="c" style="left:211.4px;letter-spacing:-.2px">Non modifié</span><span class="c" style="left:306px;letter-spacing:.1px">01/04/2004 12:08</span></div><div class="row" style="top:207px"><svg class="ic"  width="16" height="16" viewBox="0 0 16 16" style="left:22px;top:0px"><path d="M3.5 0.5H11.5V15.5H0.5V3.5Z" fill="#fff" stroke="#000"/><path d="M0.5 4.5H4.5V0.5" fill="none" stroke="#000"/><path d="M3 9.5L4.5 8L5.5 9H6.5L7.5 7.8H10.5L11.5 9H12.5L13.5 8L15 9.5V15.8H3Z" fill="#05050f"/><circle cx="8.6" cy="12.3" r="2.9" fill="#2450d0"/><circle cx="8.2" cy="11.8" r="1.3" fill="#58b8e8"/><rect x="12.6" y="11.2" width="1.6" height="3.4" fill="#eef2ff"/></svg><span class="c" style="left:40px">plan_haut_de_seine.gif</span><span class="c" style="left:211.4px;letter-spacing:-.2px">Modifié</span><span class="c" style="left:306px;letter-spacing:.1px">31/03/2005 21:36</span></div><div class="row" style="top:224px"><svg class="ic"  width="16" height="16" viewBox="0 0 16 16" style="left:22px;top:0px"><path d="M3.5 0.5H11.5V15.5H0.5V3.5Z" fill="#fff" stroke="#000"/><path d="M0.5 4.5H4.5V0.5" fill="none" stroke="#000"/><path d="M3 9.5L4.5 8L5.5 9H6.5L7.5 7.8H10.5L11.5 9H12.5L13.5 8L15 9.5V15.8H3Z" fill="#05050f"/><circle cx="8.6" cy="12.3" r="2.9" fill="#2450d0"/><circle cx="8.2" cy="11.8" r="1.3" fill="#58b8e8"/><rect x="12.6" y="11.2" width="1.6" height="3.4" fill="#eef2ff"/></svg><span class="c" style="left:40px">planlevalloisfl.jpg</span><span class="c" style="left:211.4px;letter-spacing:-.2px">Modifié</span><span class="c" style="left:306px;letter-spacing:.1px">31/03/2005 21:36</span></div><div class="row" style="top:241px"><svg class="ic"  width="16" height="16" viewBox="0 0 16 16" style="left:22px;top:0px"><path d="M3.5 0.5H11.5V15.5H0.5V3.5Z" fill="#fff" stroke="#000"/><path d="M0.5 4.5H4.5V0.5" fill="none" stroke="#000"/><path d="M3 9.5L4.5 8L5.5 9H6.5L7.5 7.8H10.5L11.5 9H12.5L13.5 8L15 9.5V15.8H3Z" fill="#05050f"/><circle cx="8.6" cy="12.3" r="2.9" fill="#2450d0"/><circle cx="8.2" cy="11.8" r="1.3" fill="#58b8e8"/><rect x="12.6" y="11.2" width="1.6" height="3.4" fill="#eef2ff"/></svg><span class="c" style="left:40px">planquartierfl2.jpg</span><span class="c" style="left:211.4px;letter-spacing:-.2px">Modifié</span><span class="c" style="left:306px;letter-spacing:.1px">31/03/2005 21:36</span></div><div class="row" style="top:258px"><svg class="ic"  width="16" height="16" viewBox="0 0 16 16" style="left:22px;top:1px"><path d="M3.5 0.5H12.5L15.5 3.5V14.5H3.5Z" fill="#d4ecf8" stroke="#2f5878"/><path d="M12.5 0.5V3.5H15.5" fill="#f4fbff" stroke="#2f5878" stroke-width=".8"/><circle cx="10" cy="8.2" r="4.3" fill="#58acc8"/><path d="M9.6 3.6Q14.8 5 13.6 9.6Q12 13 7 12.4Q10.6 11.2 10.6 8Q10.6 5.4 9.6 3.6Z" fill="#1f6f92"/><path d="M11 4.6Q13.4 5.6 13.2 8" stroke="#b8e4f0" stroke-width=".9" fill="none"/><path d="M4.5 13.5H14.5" stroke="#9ccbe4" stroke-width="1"/><rect x="0.5" y="0.5" width="9" height="9" fill="#eeeefa" stroke="#4c4a8c"/><circle cx="5" cy="5" r="3.2" fill="#6458a4"/><path d="M3.5 3.5L6.5 6.5M6.5 3.5L3.5 6.5" stroke="#f4f0ff" stroke-width="1.2"/></svg><span class="c" style="left:40px">venir_nous_voir.htm</span><span class="c" style="left:211.4px;letter-spacing:-.2px">Modifié</span><span class="c" style="left:306px;letter-spacing:.1px">01/04/2004 12:08</span></div><div class="sb"><div class="sbtn" style="left:1px"><svg width="14" height="14" viewBox="0 0 14 14"><path d="M8.2 2.9L4.6 6.3L8.2 9.7" fill="none" stroke="#4d6185" stroke-width="2"/></svg></div><div class="thumb" style="left:17px;width:277px"><i class="grip"></i></div><div class="sbtn" style="right:2px"><svg width="14" height="14" viewBox="0 0 14 14"><path d="M5.8 2.9L9.4 6.3L5.8 9.7" fill="none" stroke="#4d6185" stroke-width="2"/></svg></div></div></div></div></div><svg class="a" style="left:451px;top:308px" width="14" height="11" viewBox="0 0 14 11"><path d="M0.5 3H7.5V0.5L13.5 5.5L7.5 10.5V8H0.5Z" fill="#aca899"/></svg><svg class="a" style="left:451px;top:330px" width="14" height="11" viewBox="0 0 14 11"><path d="M13.5 3H6.5V0.5L0.5 5.5L6.5 10.5V8H13.5Z" fill="#aca899"/></svg><svg class="a" style="left:449px;top:350px" width="18" height="17" viewBox="0 0 18 17"><path d="M5 2H11.5V0L17.2 4.4L11.5 8.8V6.8H5Z" fill="#aca899"/><path d="M13 10.2H6.5V8.2L0.8 12.6L6.5 17V15H13Z" fill="#aca899"/></svg><div class="a" style="left:2px;top:604px;width:911px;height:80px;background:#fff"></div><div class="a" style="left:2px;top:602px;width:911px;height:2px;background:#f3ece0"></div><span class="a" style="left:7px;top:612px">État</span><div class="ln" style="left:31px;top:617px;width:680px;background:#a7a7a0"></div><div class="ln" style="left:887px;top:617px;width:19px;background:#a7a7a0"></div><span class="a" style="left:720px;top:612px;letter-spacing:-.13px">Publier toutes les pages modifiées</span><span class="a" style="left:16.5px;top:632px;letter-spacing:-.06px">Dernier état de publication : réussi</span><span class="a" style="left:16.5px;top:645px">Terminée : 01/04/2005 11:17:21</span><span class="a" style="left:18px;top:659px;color:#0000dc;text-decoration:underline">Afficher votre fichier journal de publication</span><svg class="a" style="left:732px;top:634px" width="13" height="10" viewBox="0 0 13 10"><path d="M0.3 2.3H7.2V0.2L12.3 4.6L7.2 9V6.9H0.3Z" fill="url(#gb)"/></svg><svg class="a" style="left:731px;top:653px" width="13" height="10" viewBox="0 0 13 10"><path d="M12.7 2.3H5.8V0.2L0.7 4.6L5.8 9V6.9H12.7Z" fill="url(#gb)"/></svg><svg class="a" style="left:730px;top:669px" width="16" height="15" viewBox="0 0 16 15"><path d="M4.5 2H10.5V0.2L15.6 4.2L10.5 8.2V6.4H4.5Z" fill="url(#gb)"/><path d="M11.5 9.4H5.5V7.6L0.4 11.6L5.5 15.6V13.8H11.5Z" fill="url(#gb)"/></svg><div class="radio" style="left:755px;top:632px"><i style="position:absolute;left:3px;top:3px;width:5px;height:5px;border-radius:50%;background:#3aa83a"></i></div><div class="radio" style="left:755px;top:651px"></div><div class="radio" style="left:755px;top:670px"></div><span class="a" style="left:770px;top:633px;letter-spacing:-.15px">Local à distant</span><span class="a" style="left:770px;top:652px;letter-spacing:-.15px">Distant à local</span><span class="a" style="left:770px;top:671px;letter-spacing:-.15px">Synchroniser</span>
</body></html>
